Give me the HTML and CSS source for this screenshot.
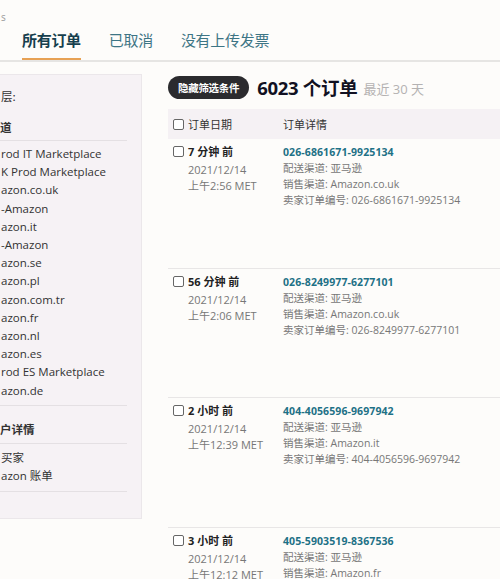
FILE: index.html
```html
<!DOCTYPE html>
<html lang="zh">
<head>
<meta charset="utf-8">
<link rel="stylesheet" href="styles.css">
</head>
<body>
<div class="page">
  <div class="topmark">s</div>
  <nav class="tabs">
    <span class="tab active">所有订单</span>
    <span class="tab">已取消</span>
    <span class="tab">没有上传发票</span>
  </nav>
  <div class="content">
    <aside class="sidebar">
      <div class="side-label">层:</div>
      <div class="side-head">道</div>
      <ul class="side-list">
        <li>rod IT Marketplace</li>
        <li>K Prod Marketplace</li>
        <li>azon.co.uk</li>
        <li>-Amazon</li>
        <li>azon.it</li>
        <li>-Amazon</li>
        <li>azon.se</li>
        <li>azon.pl</li>
        <li>azon.com.tr</li>
        <li>azon.fr</li>
        <li>azon.nl</li>
        <li>azon.es</li>
        <li>rod ES Marketplace</li>
        <li>azon.de</li>
      </ul>
      <div class="side-head second">户详情</div>
      <ul class="side-list small">
        <li>买家</li>
        <li>azon 账单</li>
      </ul>
    </aside>
    <main class="main">
      <div class="toolbar">
        <span class="pill">隐藏筛选条件</span>
        <span class="count">6023 个订单</span>
        <span class="range">最近 30 天</span>
      </div>
      <div class="thead">
        <div class="c-date"><span class="cb"></span>订单日期</div>
        <div class="c-detail">订单详情</div>
      </div>
      <div class="row">
        <div class="c-date">
          <div class="ago"><span class="cb"></span>7 分钟 前</div>
          <div class="sub">2021/12/14</div>
          <div class="sub">上午2:56 MET</div>
        </div>
        <div class="c-detail">
          <div class="oid">026-6861671-9925134</div>
          <div class="info">配送渠道: 亚马逊</div>
          <div class="info">销售渠道: Amazon.co.uk</div>
          <div class="info">卖家订单编号: 026-6861671-9925134</div>
        </div>
      </div>
      <div class="row">
        <div class="c-date">
          <div class="ago"><span class="cb"></span>56 分钟 前</div>
          <div class="sub">2021/12/14</div>
          <div class="sub">上午2:06 MET</div>
        </div>
        <div class="c-detail">
          <div class="oid">026-8249977-6277101</div>
          <div class="info">配送渠道: 亚马逊</div>
          <div class="info">销售渠道: Amazon.co.uk</div>
          <div class="info">卖家订单编号: 026-8249977-6277101</div>
        </div>
      </div>
      <div class="row">
        <div class="c-date">
          <div class="ago"><span class="cb"></span>2 小时 前</div>
          <div class="sub">2021/12/14</div>
          <div class="sub">上午12:39 MET</div>
        </div>
        <div class="c-detail">
          <div class="oid">404-4056596-9697942</div>
          <div class="info">配送渠道: 亚马逊</div>
          <div class="info">销售渠道: Amazon.it</div>
          <div class="info">卖家订单编号: 404-4056596-9697942</div>
        </div>
      </div>
      <div class="row">
        <div class="c-date">
          <div class="ago"><span class="cb"></span>3 小时 前</div>
          <div class="sub">2021/12/14</div>
          <div class="sub">上午12:12 MET</div>
        </div>
        <div class="c-detail">
          <div class="oid">405-5903519-8367536</div>
          <div class="info">配送渠道: 亚马逊</div>
          <div class="info">销售渠道: Amazon.fr</div>
        </div>
      </div>
    </main>
  </div>
</div>
</body>
</html>
```
FILE: styles.css
```css
* { box-sizing: border-box; }
html, body {
  margin: 0;
  padding: 0;
  background: #fdfcfa;
  overflow: hidden;
}
body {
  width: 500px;
  height: 579px;
  font-family: "Open Sans", "Noto Sans CJK SC", sans-serif;
  color: #333;
}
.page {
  position: relative;
  height: 579px;
  overflow: hidden;
}
.topmark {
  position: absolute;
  left: 1px;
  top: 11px;
  font-size: 10px;
  color: #999;
  line-height: 12px;
}
.tabs {
  display: flex;
  gap: 28px;
  padding: 29px 0 0 22px;
  height: 62px;
  border-bottom: 2px solid #e6e5e3;
}
.tab {
  font-family: "Noto Sans CJK SC", sans-serif;
  font-size: 15px;
  line-height: 22px;
  color: #3d7585;
  height: 31px;
  letter-spacing: -0.3px;
}
.tab.active {
  font-weight: 700;
  color: #163f4d;
  border-bottom: 2px solid #e7a154;
}
.content {
  display: flex;
  align-items: flex-start;
  padding-top: 12px;
}
.sidebar {
  width: 142px;
  flex: none;
  height: 445px;
  background: #f6f2f5;
  border: 1px solid #ebe7ea;
  border-left: none;
  padding: 12px 14px 0 0;
  font-size: 11.5px;
  color: #333;
}
.side-label {
  font-family: "Noto Sans CJK SC", sans-serif;
  line-height: 18px;
  padding-left: 1px;
}
.side-head {
  font-family: "Noto Sans CJK SC", sans-serif;
  font-weight: 700;
  line-height: 18px;
  margin-top: 13px;
  padding-bottom: 4px;
  border-bottom: 1px solid #e4e0e3;
}
.side-head.second {
  margin-top: 0;
  padding-top: 14px;
  padding-bottom: 5px;
}
.side-list {
  list-style: none;
  margin: 0;
  padding: 4px 0 5px 0;
  border-bottom: 1px solid #e4e0e3;
}
.side-list li {
  line-height: 18.2px;
  white-space: nowrap;
  padding-left: 1px;
}
.side-list.small {
  padding: 5px 0 6px;
}
.main {
  margin-left: 26px;
  flex: 1;
}
.toolbar {
  display: flex;
  align-items: center;
  height: 24px;
  margin-top: 1px;
}
.pill {
  background: #2b2b2e;
  color: #fff;
  border-radius: 12px;
  height: 23px;
  padding: 0 10px;
  font-family: "Noto Sans CJK SC", sans-serif;
  font-size: 10.5px;
  font-weight: 700;
  line-height: 23px;
  letter-spacing: -0.3px;
}
.count {
  margin-left: 8px;
  font-family: "Open Sans", "Noto Sans CJK SC", sans-serif;
  font-size: 18.5px;
  font-weight: 700;
  color: #111122;
  letter-spacing: -0.3px;
}
.range {
  margin-left: 6px;
  font-family: "Open Sans", "Noto Sans CJK SC", sans-serif;
  font-size: 13px;
  color: #b4b2b2;
  padding-top: 2px;
}
.thead {
  display: flex;
  margin-top: 10px;
  height: 30px;
  background: #f5f1f4;
  align-items: center;
  font-family: "Noto Sans CJK SC", sans-serif;
  font-size: 11px;
  color: #333;
}
.c-date {
  width: 115px;
  padding-left: 5px;
  flex: none;
}
.thead .c-date {
  display: flex;
  align-items: center;
}
.cb {
  display: inline-block;
  width: 11px;
  height: 11px;
  border: 1px solid #666;
  border-radius: 2px;
  background: #fff;
  margin-right: 4px;
  vertical-align: -1px;
}
.c-detail {
  flex: 1;
}
.row {
  display: flex;
  height: 129.5px;
  padding-top: 5px;
  border-bottom: 1px solid #e8e6e6;
}
.ago {
  font-family: "Open Sans", "Noto Sans CJK SC", sans-serif;
  font-weight: 700;
  font-size: 11px;
  line-height: 16px;
  color: #222;
  margin-bottom: 2px;
}
.sub {
  font-family: "Open Sans", "Noto Sans CJK SC", sans-serif;
  font-size: 11px;
  line-height: 16px;
  color: #777;
  padding-left: 15px;
}
.oid {
  font-family: "Open Sans", sans-serif;
  font-weight: 700;
  font-size: 10.5px;
  line-height: 16px;
  color: #1e7186;
  letter-spacing: 0.1px;
}
.info {
  font-family: "Open Sans", "Noto Sans CJK SC", sans-serif;
  font-size: 10.5px;
  line-height: 16px;
  color: #777;
}
```
